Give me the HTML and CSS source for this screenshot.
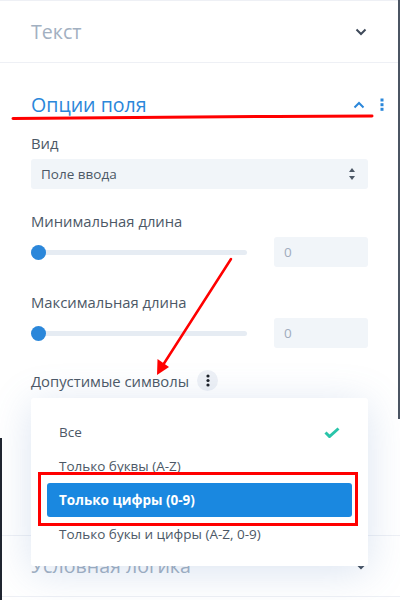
FILE: index.html
```html
<!DOCTYPE html>
<html lang="ru">
<head>
<meta charset="utf-8">
<link rel="stylesheet" href="styles.css">
</head>
<body>
<div class="panel">
  <section class="sec sec-closed">
    <div class="sec-head">
      <span class="sec-title">Текст</span>
      <svg class="chev" width="12" height="8" viewBox="0 0 12 8"><path d="M1.5 1.5l4.5 4.5 4.5-4.5" fill="none" stroke="#3f4a5a" stroke-width="2"/></svg>
    </div>
  </section>

  <section class="sec sec-open">
    <div class="sec-head open">
      <span class="sec-title">Опции поля</span>
      <span class="head-icons">
        <svg class="chev" width="12" height="8" viewBox="0 0 12 8"><path d="M1.5 6.5l4.5-4.5 4.5 4.5" fill="none" stroke="#2b87da" stroke-width="2"/></svg>
        <svg class="kebab" width="4" height="14" viewBox="0 0 4 14"><rect x="0.5" y="0.5" width="3" height="3" fill="#2b87da"/><rect x="0.5" y="5.2" width="3" height="3" fill="#2b87da"/><rect x="0.5" y="9.8" width="3" height="3" fill="#2b87da"/></svg>
      </span>
    </div>

    <div class="field field-first">
      <div class="label">Вид</div>
      <div class="select">
        <span>Поле ввода</span>
        <svg width="6" height="12" viewBox="0 0 6 12"><path d="M3 0L6 4H0z M3 12L0 8h6z" fill="#4c5866"/></svg>
      </div>
    </div>

    <div class="field">
      <div class="label">Минимальная длина</div>
      <div class="range-row">
        <div class="track"><span class="thumb"></span></div>
        <div class="num">0</div>
      </div>
    </div>

    <div class="field field-wide">
      <div class="label">Максимальная длина</div>
      <div class="range-row">
        <div class="track"><span class="thumb"></span></div>
        <div class="num">0</div>
      </div>
    </div>

    <div class="field">
      <div class="label label-help">Допустимые символы
        <span class="help"><svg width="4" height="13" viewBox="0 0 4 13"><circle cx="2" cy="2" r="1.6" fill="#1a1f27"/><circle cx="2" cy="6.5" r="1.6" fill="#1a1f27"/><circle cx="2" cy="11" r="1.6" fill="#1a1f27"/></svg></span>
      </div>
    </div>
  </section>

  <section class="sec sec-closed sec-last">
    <div class="sec-head">
      <span class="sec-title">Условная логика</span>
      <svg class="chev" width="12" height="8" viewBox="0 0 12 8"><path d="M1.5 1.5l4.5 4.5 4.5-4.5" fill="none" stroke="#3f4a5a" stroke-width="2"/></svg>
    </div>
  </section>

  <ul class="dropdown">
    <li class="opt">Все
      <svg class="check" width="16" height="11" viewBox="0 0 16 11"><path d="M1.5 5.5l4 4 9-8" fill="none" stroke="#29c4a9" stroke-width="3"/></svg>
    </li>
    <li class="opt">Только буквы (A-Z)</li>
    <li class="opt opt-active">Только цифры (0-9)</li>
    <li class="opt">Только букы и цифры (A-Z, 0-9)</li>
  </ul>

  <div class="mark-box"></div>

  <svg class="annot" width="400" height="600" viewBox="0 0 400 600">
    <path d="M13 117.5 C 120 116, 250 115.5, 372 115" fill="none" stroke="#f00" stroke-width="3" stroke-linecap="round"/>
    <path d="M231 258 L163 364" fill="none" stroke="#f00" stroke-width="2.5" stroke-linecap="round"/>
    <path d="M157 374 L157.5 358 L169 366 Z" fill="#f00"/>
  </svg>

  <div class="edge edge-right"></div>
  <div class="edge edge-left"></div>
</div>
</body>
</html>
```

FILE: styles.css
```css
* { box-sizing: border-box; }

html, body {
  margin: 0;
  padding: 0;
  width: 400px;
  height: 600px;
  overflow: hidden;
  background: #fff;
}

body {
  font-family: "Open Sans", "Noto Sans", sans-serif;
  color: #4c5866;
}

.panel {
  position: relative;
  width: 400px;
  height: 600px;
  border-top: 1px solid #eef0f5;
  background: #fff;
}

.sec { border-bottom: 1px solid #eef0f5; }

.sec-closed .sec-head { height: 61px; }
.sec-last .sec-head { height: 60px; }

.sec-head {
  display: flex;
  align-items: center;
  justify-content: space-between;
  padding: 0 33px 0 31px;
}

.sec-title {
  font-size: 19.6px;
  line-height: 24px;
  color: #a2b0c1;
}

.sec-open {
  padding: 30px 32px 0 31px;
  height: 473px;
}

.sec-head.open {
  padding: 0;
  margin-right: -16px;
}

.sec-head.open .sec-title { color: #2b87da; }

.head-icons {
  display: flex;
  align-items: center;
  gap: 15px;
}

.kebab { margin-top: -1px; }

.field { margin-top: 22px; }
.field-first { margin-top: 16px; }
.field-wide { margin-top: 25px; }

.label {
  font-size: 14.8px;
  line-height: 20px;
  color: #4c5866;
  margin-bottom: 6px;
}

.label-help {
  display: flex;
  align-items: center;
  gap: 8px;
}

.help {
  width: 21px;
  height: 21px;
  border-radius: 50%;
  background: #eef1f6;
  display: flex;
  align-items: center;
  justify-content: center;
}

.select {
  height: 30px;
  background: #f1f5f9;
  border-radius: 3px;
  display: flex;
  align-items: center;
  justify-content: space-between;
  padding: 0 13px 0 10px;
  font-size: 13.5px;
  color: #4c5866;
}

.range-row {
  display: flex;
  align-items: center;
  gap: 27px;
}

.track {
  position: relative;
  width: 216px;
  height: 5px;
  border-radius: 3px;
  background: #e6ecf3;
}

.thumb {
  position: absolute;
  left: 0;
  top: -5px;
  width: 15px;
  height: 15px;
  border-radius: 50%;
  background: #2b87da;
}

.num {
  width: 94px;
  height: 30px;
  background: #f1f5f9;
  border-radius: 3px;
  padding-left: 10px;
  font-size: 13.5px;
  line-height: 30px;
  color: #a0acbd;
}

.dropdown {
  position: absolute;
  left: 31px;
  top: 397px;
  width: 337px;
  height: 168px;
  margin: 0;
  padding: 17px 16px 0;
  list-style: none;
  background: #fff;
  border-radius: 3px;
  box-shadow: 0 6px 40px rgba(90, 130, 190, 0.22);
}

.opt {
  height: 34px;
  display: flex;
  align-items: center;
  justify-content: space-between;
  padding: 0 12px;
  font-size: 13.5px;
  color: #4c5866;
  border-radius: 3px;
}

.opt-active {
  background: #1a88e0;
  color: #fff;
  font-weight: 700;
}

.check { margin-right: 0; }

.mark-box {
  position: absolute;
  left: 38px;
  top: 471px;
  width: 320px;
  height: 54px;
  border: 3px solid #f00;
}

.annot {
  position: absolute;
  left: 0;
  top: 0;
  pointer-events: none;
}

.edge { position: absolute; width: 2px; }
.edge-right { right: 0; top: -1px; height: 419px; background: #4b5563; }
.edge-left { left: 0; top: 437px; height: 163px; background: #1f2530; }
```
